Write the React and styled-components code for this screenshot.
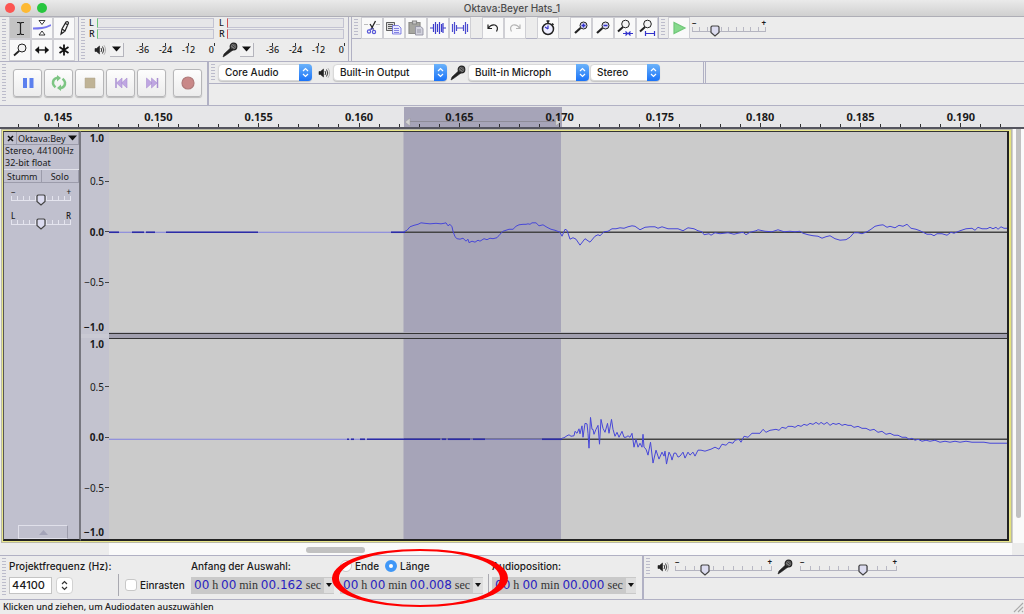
import React, { useState } from 'react';
import styled, { createGlobalStyle } from 'styled-components';

const GlobalStyle = createGlobalStyle`
    * {
        box-sizing: border-box;
    }

    body {
        margin: 0;
        background: #ececec;
        color: #1a1a1a;
        font-family: Inter, "Liberation Sans", sans-serif;
        font-size: 11px;
    }

    button, input, select {
        font: inherit;
        color: inherit;
        margin: 0;
        padding: 0;
    }

    svg {
        display: block;
    }
`;

const line = '#b1b1c4';
const lucida = '"Noto Sans", "DejaVu Sans", sans-serif';

const Window = styled.div`
    min-height: 100vh;
    display: flex;
    flex-direction: column;
    overflow: hidden;
`;

const TitleBar = styled.header`
    height: 17px;
    display: grid;
    grid-template-columns: 1fr auto 1fr;
    align-items: center;
    padding: 0 5px;
    border-bottom: 1px solid #aeaeb6;
    background: linear-gradient(#eaeaea, #d0d0d0);

    h1 {
        margin: 0;
        color: #4c4c4c;
        font-size: 10px;
        line-height: 16px;
        font-weight: 500;
    }
`;

const Lights = styled.div`
    display: flex;
    gap: 6px;
`;

const Light = styled.button`
    width: 10px;
    height: 10px;
    border: 0;
    border-radius: 50%;
    background: ${props => props.$color};
`;

const ToolDock = styled.div`
    display: flex;
    height: ${props => props.$height};
    border-bottom: 1px solid ${line};
`;

const Toolbar = styled.section`
    display: flex;
    align-items: ${props => props.$align || 'center'};
    border-right: ${props => (props.$open ? '0' : `1px solid ${line}`)};
    padding-left: 2px;
    flex: none;
`;

const DockStack = styled.div`
    flex: 1;
    min-width: 0;
    margin-left: ${props => props.$gap || '0'};
    border-left: 1px solid ${line};
`;

const DockRow = styled.div`
    display: flex;
    height: 22px;
    border-bottom: 1px solid ${line};
`;

const Grip = styled.i`
    flex: none;
    align-self: stretch;
    width: 4px;
    margin: 2px 3px 2px 0;
    background: repeating-linear-gradient(#bcbccb 0 1px, transparent 1px 3px);
`;

const ToolGrid = styled.div`
    display: grid;
    grid-template-columns: repeat(3, 22px);
    grid-auto-rows: 22px;
    margin-right: 3px;
`;

const ToolButton = styled.button`
    width: 22px;
    height: 22px;
    display: flex;
    align-items: center;
    justify-content: center;
    border: 1px solid #cfcfd4;
    background: ${props => (props.$active ? '#c3c3c3' : '#f9f9f9')};
`;

const ButtonGroup = styled.div`
    display: flex;
    margin-right: 11px;

    &:last-child {
        margin-right: 0;
    }
`;

const MeterBox = styled.div`
    width: 130px;
    height: 44px;
    padding-top: 1px;
`;

const MeterBars = styled.div`
    display: grid;
    grid-template-columns: 8px 1fr;
    grid-auto-rows: 10px;
    row-gap: 1px;
    margin-right: 4px;
    padding-left: 1px;
    font-family: ${lucida};
    font-size: 9px;
    font-weight: 500;
    line-height: 10px;
`;

const MeterBar = styled.div`
    border: 1px solid #c3c3d2;
    border-left: 1px solid ${props => props.$color};
    background: #e6e6e8;
`;

const MeterFoot = styled.div`
    display: flex;
    align-items: center;
    padding-left: 3px;
    height: 21px;
`;

const MeterMenu = styled.button`
    width: 14px;
    height: 14px;
    display: flex;
    align-items: center;
    justify-content: center;
    border: 0;
    border-right: 1px solid #b5b5bd;
    border-bottom: 1px solid #b5b5bd;
    background: #f2f2f2;
`;

const MeterScale = styled.div`
    flex: 1;
    display: grid;
    grid-template-columns: 23px 23px 23px 1fr;
    margin-left: 7px;
    font-family: ${lucida};
    font-size: 9px;
    font-weight: 500;
    line-height: 14px;
    text-align: center;

    span {
        background: linear-gradient(#333, #333) center top / 1px 3px no-repeat;
    }

    span:last-child {
        text-align: right;
        padding-right: 4px;
        background-position: calc(100% - 3px) top;
    }
`;

const TransportButtons = styled.div`
    display: flex;
    gap: 2px;
    padding: 0 5px 2px 4px;
`;

const TransportButton = styled.button`
    width: 29px;
    height: 28px;
    margin-left: ${props => (props.$apart ? '5px' : '0')};
    display: flex;
    align-items: center;
    justify-content: center;
    border: 1px solid #b6b6b8;
    border-radius: 3px;
    background: linear-gradient(#fdfdfd, #ececec);
    box-shadow: 0 1px 1px #bcbcbc;
`;

const DeviceSelect = styled.label`
    position: relative;
    width: ${props => props.$width};
    height: 17px;
    margin-right: ${props => props.$gap || '4px'};

    select {
        appearance: none;
        width: 100%;
        height: 17px;
        padding: 0 14px 0 6px;
        border: 1px solid #d9d9d9;
        border-radius: 4px;
        background: #fff;
        font-size: 10px;
        font-weight: 500;
        line-height: 15px;
        box-shadow: 0 1px 1px #c4c4c4;
    }

    span {
        position: absolute;
        top: 0;
        right: 0;
        width: 13px;
        height: 17px;
        display: flex;
        align-items: center;
        justify-content: center;
        border-radius: 0 4px 4px 0;
        background: linear-gradient(#6cb3fa, #1a73f8);
        pointer-events: none;
    }
`;

const IconSlot = styled.span`
    width: ${props => props.$width};
    margin-right: 2px;
    display: flex;
    justify-content: center;
`;

const SliderBox = styled.label`
    position: relative;
    display: block;
    width: ${props => props.$width};
    height: 20px;
    font-family: ${lucida};
    font-size: 8px;
    line-height: 9px;

    input {
        position: absolute;
        inset: 0;
        width: 100%;
        height: 100%;
        opacity: 0;
    }
`;

const SliderEnds = styled.span`
    display: flex;
    justify-content: space-between;
    font-weight: ${props => (props.$light ? '500' : '700')};
`;

const SliderScale = styled.span`
    display: block;
    height: 5px;
    border-bottom: 1px solid ${props => (props.$light ? '#e4e4ee' : '#b4b4c0')};
    background: repeating-linear-gradient(to right,
        ${props => (props.$light ? '#e4e4ee' : '#b8b8c4')} 0 1px, transparent 1px 10%);
    border-right: 1px solid ${props => (props.$light ? '#e4e4ee' : '#b8b8c4')};
`;

const SliderThumb = styled.svg`
    position: absolute;
    top: 7px;
    margin-left: -5px;
`;

const Ruler = styled.div`
    position: relative;
    height: 23px;
    background: #e6e6e8;
    border-bottom: 2px solid #55555f;
`;

const RulerSelection = styled.div`
    position: absolute;
    top: 1px;
    bottom: 0;
    left: 39.5%;
    width: 15.4%;
    background: #a6a4b8;

    svg {
        position: absolute;
        left: 0;
        bottom: 1px;
        width: 100%;
        height: 8px;
    }
`;

const RulerCells = styled.div`
    position: relative;
    display: grid;
    grid-template-columns: repeat(10, 1fr);
    height: 21px;
    margin: 0 13px 0 8px;
    font-family: ${lucida};
    font-weight: 700;
    line-height: 21px;
    text-align: center;
`;

const RulerCell = styled.div`
    position: relative;

    div {
        position: absolute;
        inset: auto 0 0 0;
        display: flex;
        justify-content: space-around;
        align-items: flex-end;
    }

    i {
        width: 1px;
        height: 3px;
        background: #333;
    }

    i:nth-child(3) {
        height: 4px;
    }
`;

const TrackArea = styled.main`
    flex: 1;
    display: flex;
    min-height: 300px;
`;

const Track = styled.section`
    flex: 1;
    min-width: 0;
    display: flex;
    margin-left: 1px;
    border: 1px solid #e3e17c;
    border-width: 1px 2px 1px 1px;
    outline: 1px solid #b9b9a8;
    outline-offset: -1px;
    padding: 1px;
    background: #e9e78a;

    > div {
        border-top: 1px solid #333;
        border-bottom: 2px solid #222;
    }
`;

const TrackPanel = styled.div`
    width: 78px;
    flex: none;
    display: flex;
    flex-direction: column;
    background: #c0c0ce;
    border-left: 1px solid #555;
    border-right: 2px solid #77777f;
    font-family: ${lucida};
    font-size: 9px;
    line-height: 13px;
`;

const TrackHead = styled.div`
    display: grid;
    grid-template-columns: 13px 1fr;
    height: 13px;
    border-bottom: 1px solid #9c9cab;
`;

const PanelButton = styled.button`
    display: flex;
    align-items: center;
    justify-content: ${props => (props.$menu ? 'space-between' : 'center')};
    padding: 0 ${props => (props.$menu ? '1px' : '0')};
    border: 0;
    border-right: 1px solid #9c9cab;
    background: transparent;
    line-height: 11px;
    white-space: nowrap;
`;

const TrackInfo = styled.p`
    margin: 0;
    padding: 0 1px;
    line-height: 12px;
    white-space: nowrap;
`;

const MuteSolo = styled.div`
    display: grid;
    grid-template-columns: 1fr 1fr;
    height: 14px;
    border-top: 1px solid #e2e2ea;
    border-bottom: 1px solid #9c9cab;
`;

const PanelSliders = styled.div`
    display: grid;
    gap: 4px;
    padding: 4px 7px;
`;

const Collapse = styled.button`
    width: 50px;
    height: 14px;
    margin: auto auto 0 14px;
    display: flex;
    align-items: center;
    justify-content: center;
    border: 1px solid #e0e0ea;
    border-right-color: #9c9cab;
    background: transparent;
`;

const Channels = styled.div`
    flex: 1;
    min-width: 0;
    display: flex;
    flex-direction: column;
    gap: 4px;
    background: linear-gradient(to right, #c9c9d3 28px, #a19fae 28px);
    border-right: 2px solid #222;
`;

const Channel = styled.div`
    flex: 1;
    min-height: 0;
    display: grid;
    grid-template-columns: 28px 1fr;
`;

const LevelRuler = styled.div`
    display: grid;
    grid-template-rows: 12px 1fr 26px 1fr 14px;
    align-items: center;
    background: #c3c3cf;
    font-family: ${lucida};
    font-size: 10px;
    line-height: 12px;
    text-align: right;

    span {
        padding-right: 5px;
    }

    span:nth-child(odd) {
        font-weight: 700;
    }

    span:nth-child(2), span:nth-child(3), span:nth-child(4) {
        background: linear-gradient(#444, #444) right center / 4px 1px no-repeat;
    }
`;

const WaveCanvas = styled.div`
    position: relative;
    min-width: 0;
    border-bottom: ${props => (props.$last ? '0' : '1px solid #333')};
    border-top: ${props => (props.$last ? '1px solid #333' : '0')};

    svg {
        position: absolute;
        width: 100%;
        height: 100%;
    }
`;

const VerticalScroll = styled.div`
    width: 12px;
    flex: none;
    padding: 0 3px 25px 3px;
    background: #fafafa;
    border-left: 1px solid #d0d0d0;

    div {
        height: 100%;
        border-radius: 0 0 4px 4px;
        background: #c1c1c1;
    }
`;

const HorizontalScroll = styled.div`
    height: 12px;
    margin: 0 12px 0 109px;
    padding: 4px 0 2px;
    background: #fafafa;

    div {
        width: 6.5%;
        height: 6px;
        margin-left: 21.8%;
        border-radius: 3px;
        background: #c1c1c1;
    }
`;

const BottomDock = styled.footer`
    position: relative;
    display: flex;
    height: 45px;
    border-top: 1px solid ${line};
    border-bottom: 1px solid ${line};
`;

const Field = styled.div`
    display: grid;
    grid-template-rows: 20px 18px;
    align-items: center;
    width: ${props => props.$width};
    white-space: nowrap;
    font-size: 10px;
    font-weight: 500;
`;

const FieldRow = styled.div`
    display: flex;
    align-items: center;
    gap: ${props => props.$gap || '4px'};

    input[type='text'] {
        width: 43px;
        height: 17px;
        padding-left: 2px;
        border: 1px solid #c4c4c4;
        background: #fff;
        font-size: 11px;
    }
`;

const Stepper = styled.button`
    width: 17px;
    height: 17px;
    display: flex;
    align-items: center;
    justify-content: center;
    border: 1px solid #d2d2d2;
    border-radius: 4px;
    background: #fff;
`;

const Divider = styled.i`
    width: 1px;
    height: 22px;
    margin: 18px ${props => props.$right} 0 ${props => props.$left};
    background: #a9a9b0;
`;

const Choice = styled.label`
    display: flex;
    align-items: center;
    gap: 3px;
    font-size: 10px;
    font-weight: 500;

    input {
        appearance: none;
        width: 12px;
        height: 12px;
        border: 1px solid #c8c8c8;
        border-radius: ${props => (props.$round ? '50%' : '3px')};
        background: #fff;
    }

    input:checked {
        border: 4px solid #3f97f7;
    }
`;

const TimeField = styled.div`
    display: flex;
    align-items: center;
    justify-content: space-between;
    height: 17px;
    padding-left: 3px;
    background: #c9c9c9;
    color: #333;
    font-family: "Liberation Serif", serif;
    font-size: 12px;
    line-height: 17px;

    b {
        color: #2a1fc0;
        font-family: "DejaVu Sans", sans-serif;
        font-weight: 400;
    }

    button {
        width: 10px;
        height: 15px;
        display: flex;
        align-items: center;
        justify-content: center;
        border: 0;
        background: #dedede;
    }
`;

const RedMark = styled.svg`
    position: absolute;
    left: 332px;
    top: -8px;
    pointer-events: none;
`;

const StatusBar = styled.div`
    display: flex;
    justify-content: space-between;
    height: 14px;
    padding-left: 3px;
    font-family: ${lucida};
    font-size: 9px;
    font-weight: 500;
    line-height: 13px;
`;

const Icon = ({ size = 18, w = size, h = size, children }) => (
    <svg width={w} height={h} viewBox={`0 0 ${w} ${h}`} fill="none" stroke="#222" strokeWidth="1.2">
        {children}
    </svg>
);

const Down = () => (
    <svg width="9" height="6" viewBox="0 0 9 6"><path d="M0 0.5h9L4.500 5.500z" fill="#111" /></svg>
);

const SmallDown = () => (
    <svg width="6" height="4" viewBox="0 0 6 4"><path d="M0 0h6L3 4z" fill="#111" /></svg>
);

const UpDown = ({ color }) => (
    <Icon w={7} h={11}>
        <path d="M1 4L3.500 1.500 6 4M1 7l2.500 2.500L6 7" stroke={color} />
    </Icon>
);

const Speaker = () => (
    <Icon w={12} h={12}>
        <path d="M1 4.500h1.500L5.500 2v8L2.500 7.500H1z" fill="#222" strokeWidth="0.600" />
        <path d="M7 4q1.500 2 0 4M8.500 2.500q2.600 3.500 0 7" strokeWidth="0.900" />
        <path d="M10 1.200q3.200 4.800 0 9.600" strokeWidth="0.500" stroke="#777" />
    </Icon>
);

const Mic = () => (
    <Icon w={16} h={16}>
        <path d="M1 15l1-3 7-6.500L11 8l-7.500 5.500z" fill="#222" strokeWidth="0.600" />
        <circle cx="11.500" cy="4.500" r="3.300" fill="#777" />
        <path d="M9.500 3l4 3M11 1.500l3 3M9 5.500l3 2" strokeWidth="0.700" />
    </Icon>
);

const toolIcons = {
    Auswahl: <Icon><path d="M6 3.500h2.500L9.500 4.500 10.500 3.500H13M9.500 4.500v10M6 15.500h2.500l1-1 1 1H13" /></Icon>,
    'Hüllkurve': (
        <Icon>
            <path d="M0 9.500q5 0 9-.5t9-3" stroke="#7676ee" strokeWidth="1.800" />
            <path d="M6 1.500h6L9 5.500zM9 12l3 4H6z" fill="#fff" strokeWidth="0.900" />
        </Icon>
    ),
    Zeichnen: <Icon><path d="M6 15l1-5 4-7q2-1 2.500 1L10 12zM7 10l3 2M10.500 4.500l2.500 1.500" /></Icon>,
    Zoom: <Icon><circle cx="11" cy="7" r="4" fill="#f4f4f4" strokeWidth="1" /><path d="M8 10l-5 4.500" strokeWidth="1.800" /></Icon>,
    Verschieben: <Icon><path d="M3 9h12" strokeWidth="1.500" /><path d="M6 5.500L2 9l4 3.500zM12 5.500l4 3.500-4 3.500z" fill="#111" strokeWidth="0.300" /></Icon>,
    Multi: <Icon><path d="M9 3.500v11M4.500 6l9 6M13.500 6l-9 6" strokeWidth="1.800" stroke="#111" /></Icon>,
};

const lens = (
    <>
        <circle cx="11.500" cy="6.500" r="3.500" fill="#dcdcf0" strokeWidth="1" />
        <path d="M8.500 9l-5.500 5" strokeWidth="2.200" />
    </>
);

const editGroups = [
    {
        Ausschneiden: (
            <Icon>
                <path d="M1 5.500h4M13 5.500h4" stroke="#bbb" />
                <path d="M12.500 2L8 10.500M7 5l3.500 5.500" strokeWidth="1.300" />
                <path d="M6.500 10.500l4-1" stroke="#5757d8" />
                <circle cx="6" cy="12.500" r="1.600" stroke="#5757d8" /><circle cx="11" cy="13" r="1.600" stroke="#5757d8" />
            </Icon>
        ),
        Kopieren: (
            <Icon>
                <path d="M1.500 3.500h8v8h-8zM3 5.500h5M3 7.500h5M3 9.500h5" fill="#ddd" strokeWidth="0.700" />
                <path d="M7.500 6.500h6l2.500 2.500v6H7.500zM9 9.500h5M9 11.500h5M9 13.500h5" fill="#e8e8ff" stroke="#5757d8" strokeWidth="0.700" />
            </Icon>
        ),
        'Einfügen': (
            <Icon>
                <path d="M2 3.500h11v11H2z" fill="#a6a6a0" stroke="#8c8c88" /><path d="M5.500 2h4v3h-4z" fill="#ccc" stroke="#888" />
                <path d="M8.500 7.500h5l2.500 2v6.500H8.500zM10 11h4M10 13h4" fill="#d2d2dd" stroke="#9292a2" strokeWidth="0.900" />
            </Icon>
        ),
        Trimmen: <Icon><path d="M1 9h3M14 9h3M4.500 5v8M6.500 3v12M8.500 5v8M10.500 3v12M12.500 5v8M14 4v10" stroke="#3c3ccc" /></Icon>,
        Stille: <Icon><path d="M1.500 5v8M3.500 3v12M5.500 6v6M6 9h6M12.500 6v6M14.500 3v12M16.500 5v8" stroke="#4a4ad0" /></Icon>,
    },
    {
        'Rückgängig': <Icon><path d="M4 9.500q3-4.500 7-3.500 4 2 1.500 6.500M4 5.500v4h4" strokeWidth="1.200" /></Icon>,
        Wiederholen: <Icon><path d="M14 9.500q-3-4.500-7-3.500-4 2-1.500 6.500M14 5.500v4h-4" stroke="#b5b5b5" /></Icon>,
    },
    {
        Timer: (
            <Icon>
                <circle cx="9" cy="10" r="5.500" fill="#eef" strokeWidth="1.500" />
                <path d="M7.500 2h3M9 2v2.500M13 4.500l1.500 1.500" strokeWidth="1.600" /><path d="M9 10V6.500M9 10l-3-2" stroke="#33c" />
            </Icon>
        ),
    },
    {
        'Einzoomen': <Icon>{lens}<path d="M9.500 6.500h4M11.500 4.500v4" stroke="#33c" strokeWidth="1.500" /></Icon>,
        'Auszoomen': <Icon>{lens}<path d="M9.500 6.500h4" stroke="#33c" strokeWidth="1.500" /></Icon>,
        'Auswahl einpassen': (
            <Icon>
                <circle cx="9.500" cy="5" r="3.800" fill="#f4f4f4" strokeWidth="1" /><path d="M7 8l-5 4.500" strokeWidth="2" />
                <path d="M7 14.500h4.500M12.500 14.500H17M9.500 12.500l2 2-2 2M14.500 12.500l-2 2 2 2" stroke="#33c" />
            </Icon>
        ),
        'Projekt einpassen': (
            <Icon>
                <circle cx="9.500" cy="5" r="3.800" fill="#f4f4f4" strokeWidth="1" /><path d="M7 8l-5 4.500" strokeWidth="2" />
                <path d="M7 14.500h10M7.500 12v5M16.500 12v5" stroke="#33c" />
            </Icon>
        ),
    },
];

const transport = {
    Pause: <Icon><path d="M4 4h4v10H4zM10.500 4h4v10h-4z" fill="#5c80ee" stroke="none" /></Icon>,
    Wiedergabe: (
        <Icon>
            <path d="M7.500 3.800q-5 1-4.500 6 .5 2 2.500 3.500M10.500 14.200q5-1 4.500-6-.5-2-2.500-3.500" stroke="#7dc583" strokeWidth="2.500" />
            <path d="M7 1l4 3-4 3.500zM11 17l-4-3 4-3.500z" fill="#7dc583" stroke="none" />
        </Icon>
    ),
    Stopp: <Icon><path d="M4 4h10v10H4z" fill="#bfb395" stroke="#b0a68c" strokeWidth="0.500" /></Icon>,
    Anfang: <Icon><path d="M4 4v10" stroke="#a98fd0" strokeWidth="1.500" /><path d="M10 4v10L4.500 9zM15 4v10L9.500 9z" fill="#bfa6e2" stroke="#a98fd0" strokeWidth="0.600" /></Icon>,
    Ende: <Icon><path d="M14.500 4v10" stroke="#a98fd0" strokeWidth="1.500" /><path d="M3.500 4v10L9 9zM8.500 4v10L14 9z" fill="#bfa6e2" stroke="#a98fd0" strokeWidth="0.600" /></Icon>,
    Aufnahme: <Icon><circle cx="9" cy="9" r="6" fill="#c98888" stroke="#b07a7a" /></Icon>,
};

const Slider = ({ name, width, start, low = '−', high = '+', light }) => {
    const [value, setValue] = useState(start);

    return (
        <SliderBox $width={width}>
            <SliderEnds $light={light}><span>{low}</span><span>{high}</span></SliderEnds>
            <SliderScale $light={light} />
            <SliderThumb width="10" height="12" viewBox="0 0 10 12" style={{ left: `${value}%` }}>
                <path d="M2 1h6l1 1v5.500L5 11 1 7.500V2z" fill="#dcdcf0" stroke="#444" strokeWidth="1.200" />
            </SliderThumb>
            <input type="range" aria-label={name} value={value} onChange={e => setValue(Number(e.target.value))} />
        </SliderBox>
    );
};

const Meter = ({ name, color, icon }) => (
    <MeterBox>
        <MeterBars>
            <span>L</span><MeterBar $color={color} />
            <span>R</span><MeterBar $color={color} />
        </MeterBars>
        <MeterFoot>
            <IconSlot $width="17px">{icon}</IconSlot>
            <MeterMenu aria-label={name}><Down /></MeterMenu>
            <MeterScale><span>-36</span><span>-24</span><span>-12</span><span>0</span></MeterScale>
        </MeterFoot>
    </MeterBox>
);

const Device = ({ name, value, width, gap }) => (
    <DeviceSelect $width={width} $gap={gap}>
        <select aria-label={name} defaultValue={value}><option>{value}</option></select>
        <span><UpDown color="#fff" /></span>
    </DeviceSelect>
);

const Time = ({ seconds }) => (
    <TimeField>
        <b>00</b><span>h</span><b>00</b><span>min</span><b>{seconds}</b><span>sec</span>
        <button aria-label="Format"><SmallDown /></button>
    </TimeField>
);

// x,y pairs in track coordinates, zero line at y = 101
const leftWave = `404,100.500 407,99 410,95.500 414,94 418,93 421,91.500 425,92 430,92.500 436,92 441,92.500 444,92 446,91.500
448,94.500 450,93 452,95.500 453,100 455,105.500 457,107.500 460,108 463,107 466,110 468,108 469,111.500 472,110 475,111
478,109 480,110 484,107.500 487,108.500 490,107 493,107.500 497,106.500 500,103 503,100 506,99 509,98 513,98 516,95 519,93.500
523,93 526,93 528,92.500 530,93 532,91.500 536,91.500 539,94.500 543,93.500 547,96 551,98 555,99 560,101 562,105 565,98
567,99 570,108 573,106.500 576,108 580,114 585,107.500 590,111 595,105 598,103.500 600,104.500 604,100.500 608,100 612,97.500
616,97.500 620,96.500 624,97 628,95.500 632,94.500 635,95 640,98.500 645,96 650,95.500 655,95.500 658,97 662,95.500 668,97.500
673,97.500 678,97.500 683,99.500 688,96.500 694,97.500 698,99.500 702,100.500 704,103.500 709,102.500 711,104 715,101.500
720,102.500 728,101.500 734,103 738,102 743,101 746,103.500 750,101 756,99.500 758,98.500 765,100 772,100.500 778,98.500
784,100.500 790,100 795,100.500 800,100 803,102 808,103.500 813,104.500 818,105 822,107 826,105.500 830,104.500 835,107.500
840,109 846,108.500 850,106 854,101.500 858,101.500 862,102.500 867,100.500 871,98 875,95 879,94 883,93.500 887,96 890,95
895,96.500 899,94 903,95 907,93 911,97 916,98 920,99.500 924,101.500 927,103 931,103 934,104.500 937,102.500 942,102.500
947,104 951,101 954,102 960,99.500 966,97.500 972,97 975,99 978,96 982,97.500 987,97.500 990,96 993,97.500 996,96 998,98
1001,95.500 1004,97 1007,97`;

const rightWave = `562,100 564,99.500 567,97.500 569,96.500 571,98 574,97.500 575,93 577,95 579,90.500 580,95.500 582,87.500 583,99
585,85 587,85.500 588,95 589,110 590.500,79 592,91 593,91 594,96 596,91 598,87 599.500,106 601,81 603,90 605,94 607.500,85
609,95 611.500,81 613,91 615,98 617,94 619,99 622,93 624,99 626,99 628,97.500 630,99 632,95 634,109 636,101 638,109 640,105
642,109 643,96 644,109 646,111 648,117 650.500,104 653,125 656,112 659,121 662,114 664,118 665,113 666.500,126 669,114
671,118 672,122 674,115 676,115 678,119 680,118 683,114 685,120 688,114 690,117 693,114 695,118 698,112 701,112 705,113
708,112 711,111 715,109 719,111 722,106 726,107 729,104 733,105 735,102 739,101 741,104 744,98 748,99 752,95 756,95 760,95
763,91 766,94 770,92 776,91 779,92 782,89 786,90 788,88 792,88 795,89 798,87 801,88 804,86 807,87 810,85 813,86 816,84
819,86 821,84 824,86 827,84 830,87 833,85 836,86 839,85 842,87 845,86 848,87 851,87 854,89 858,88 862,90 866,90 870,92
874,91 878,94 882,93 886,96 890,95 894,97 898,97 902,99 906,99 909,101 912,100 915,102 918,101 922,103 926,102 930,103
935,102 940,104 945,103 950,104 955,103 960,104 966,103 972,104 978,104 984,104 990,105 996,105 1002,105 1007,105`;

const Wave = ({ points, quiet, loud, last }) => (
    <WaveCanvas $last={last}>
        <svg viewBox="109 0 898 202" preserveAspectRatio="none" fill="none">
            <rect x="109" width="898" height="202" fill="#cbcbcb" />
            <rect x="403.500" width="157.500" height="202" fill="#a6a4b8" />
            <path d="M404 101H1007" stroke="#444" strokeWidth="1.500" />
            <path d={`M${quiet[0]} 101H${quiet[1]}`} stroke="#8080e0" />
            {loud.map(([from, to]) => (
                <path key={from} d={`M${from} 101H${to}`} stroke="#2c2ca6" strokeWidth="1.600" />
            ))}
            <polyline points={points} stroke="#4747d8" vectorEffect="non-scaling-stroke" />
        </svg>
    </WaveCanvas>
);

const Levels = () => (
    <LevelRuler>
        <span>1.0</span><span>0.5</span><span>0.0</span><span>−0.5</span><span>−1.0</span>
    </LevelRuler>
);

const times = ['0.145', '0.150', '0.155', '0.160', '0.165', '0.170', '0.175', '0.180', '0.185', '0.190'];

const App = () => {
    const [tool, setTool] = useState('Auswahl');

    return (
        <Window>
            <GlobalStyle />
            <TitleBar>
                <Lights>
                    <Light $color="#fc5652" aria-label="Schließen" />
                    <Light $color="#fdb933" aria-label="Minimieren" />
                    <Light $color="#27c63f" aria-label="Vergrößern" />
                </Lights>
                <h1>Oktava:Beyer Hats_1</h1>
            </TitleBar>

            <ToolDock $height="45px">
                <Toolbar>
                    <Grip />
                    <ToolGrid>
                        {Object.entries(toolIcons).map(([name, icon]) => (
                            <ToolButton key={name} aria-label={name} $active={tool === name} onClick={() => setTool(name)}>
                                {icon}
                            </ToolButton>
                        ))}
                    </ToolGrid>
                </Toolbar>
                <Toolbar>
                    <Grip />
                    <Meter name="Wiedergabepegel" color="#6cc678" icon={<Speaker />} />
                    <Meter name="Aufnahmepegel" color="#d05050" icon={<Mic />} />
                </Toolbar>
                <DockStack $gap="2px">
                    <DockRow>
                        <Toolbar>
                            <Grip />
                            {editGroups.map((group, i) => (
                                <ButtonGroup key={i}>
                                    {Object.entries(group).map(([name, icon]) => (
                                        <ToolButton key={name} aria-label={name}>{icon}</ToolButton>
                                    ))}
                                </ButtonGroup>
                            ))}
                        </Toolbar>
                        <Toolbar $open>
                            <Grip />
                            <ToolButton aria-label="Abspielen">
                                <Icon><path d="M4 3.500v11L15 9z" fill="#86d98c" stroke="#6fc678" /></Icon>
                            </ToolButton>
                            <IconSlot $width="0" />
                            <Slider name="Geschwindigkeit" width="74px" start={31} />
                        </Toolbar>
                    </DockRow>
                </DockStack>
            </ToolDock>

            <ToolDock $height="44px">
                <Toolbar>
                    <Grip />
                    <TransportButtons>
                        {Object.entries(transport).map(([name, icon]) => (
                            <TransportButton key={name} aria-label={name} $apart={name === 'Aufnahme'}>{icon}</TransportButton>
                        ))}
                    </TransportButtons>
                </Toolbar>
                <DockStack>
                    <DockRow>
                        <Toolbar>
                            <Grip />
                            <Device name="Audio-Host" value="Core Audio" width="94px" />
                            <IconSlot $width="15px"><Speaker /></IconSlot>
                            <Device name="Ausgabe" value="Built-in Output" width="114px" gap="2px" />
                            <IconSlot $width="17px"><Mic /></IconSlot>
                            <Device name="Eingabe" value="Built-in Microph" width="121px" gap="1px" />
                            <Device name="Kanäle" value="Stereo" width="70px" gap="43px" />
                        </Toolbar>
                        <DockStack $gap="1px" />
                    </DockRow>
                </DockStack>
            </ToolDock>

            <Ruler>
                <RulerSelection>
                    <svg viewBox="0 0 158 8" preserveAspectRatio="none">
                        <path d="M4 3.500H154" stroke="#8e8c98" />
                        <path d="M6 0v8L1 4zM152 0v8l5-4z" fill="#d2d2d2" stroke="#999" strokeWidth="0.500" />
                    </svg>
                </RulerSelection>
                <RulerCells>
                    {times.map(time => (
                        <RulerCell key={time}>
                            {time}
                            <div><i /><i /><i /><i /><i /></div>
                        </RulerCell>
                    ))}
                </RulerCells>
            </Ruler>

            <TrackArea>
                <Track>
                    <TrackPanel>
                        <TrackHead>
                            <PanelButton aria-label="Spur schließen">
                                <Icon w={7} h={7}><path d="M1 1l5 5M6 1L1 6" strokeWidth="1.600" stroke="#111" /></Icon>
                            </PanelButton>
                            <PanelButton $menu>Oktava:Bey<Down /></PanelButton>
                        </TrackHead>
                        <TrackInfo>Stereo, 44100Hz</TrackInfo>
                        <TrackInfo>32-bit float</TrackInfo>
                        <MuteSolo>
                            <PanelButton>Stumm</PanelButton>
                            <PanelButton>Solo</PanelButton>
                        </MuteSolo>
                        <PanelSliders>
                            <Slider name="Lautstärke" width="60px" start={50} light />
                            <Slider name="Balance" width="60px" start={50} low="L" high="R" light />
                        </PanelSliders>
                        <Collapse aria-label="Einklappen">
                            <svg width="9" height="5" viewBox="0 0 9 5"><path d="M0 5h9L4.500 0z" fill="#a3a3b8" /></svg>
                        </Collapse>
                    </TrackPanel>
                    <Channels>
                        <Channel>
                            <Levels />
                            <Wave
                                points={leftWave}
                                quiet={[109, 404]}
                                loud={[[109, 119], [132, 144], [146, 155], [166, 258], [391, 405]]}
                            />
                        </Channel>
                        <Channel>
                            <Levels />
                            <Wave
                                points={rightWave}
                                quiet={[109, 562]}
                                loud={[[347, 349], [351, 354], [360, 365], [367, 440], [442, 446], [448, 470], [473, 485], [542, 562]]}
                                last
                            />
                        </Channel>
                    </Channels>
                </Track>
                <VerticalScroll><div /></VerticalScroll>
            </TrackArea>
            <HorizontalScroll><div /></HorizontalScroll>

            <BottomDock>
                <Toolbar $align="flex-start">
                    <Grip />
                    <Field $width="109px">
                        <label htmlFor="rate">Projektfrequenz (Hz):</label>
                        <FieldRow>
                            <input id="rate" type="text" defaultValue="44100" />
                            <Stepper aria-label="Frequenz wählen"><UpDown color="#333" /></Stepper>
                        </FieldRow>
                    </Field>
                    <Divider $left="0" $right="6px" />
                    <Field $width="66px">
                        <span />
                        <Choice><input type="checkbox" />Einrasten</Choice>
                    </Field>
                    <Field $width="143px">
                        <span>Anfang der Auswahl:</span>
                        <Time seconds="00.162" />
                    </Field>
                    <IconSlot $width="4px" />
                    <Field $width="143px">
                        <FieldRow $gap="6px">
                            <Choice $round><input type="radio" name="end" />Ende</Choice>
                            <Choice $round><input type="radio" name="end" defaultChecked />Länge</Choice>
                        </FieldRow>
                        <Time seconds="00.008" />
                    </Field>
                    <Divider $left="5px" $right="3px" />
                    <Field $width="144px">
                        <span>Audioposition:</span>
                        <Time seconds="00.000" />
                    </Field>
                    <IconSlot $width="4px" />
                </Toolbar>
                <DockStack>
                    <DockRow>
                        <Toolbar $open>
                            <Grip />
                            <IconSlot $width="20px"><Speaker /></IconSlot>
                            <Slider name="Ausgabelautstärke" width="97px" start={31} />
                            <IconSlot $width="26px"><Mic /></IconSlot>
                            <Slider name="Eingabelautstärke" width="97px" start={65} />
                        </Toolbar>
                    </DockRow>
                </DockStack>
                <RedMark width="177" height="60" viewBox="0 0 177 60">
                    <path
                        d="M0 30C2 12 38 1 88 1s88 12 88 29-38 29-88 29S-1 47 0 30zM7 30c0 15 34 27 81 27s80-12 80-27S134 3 88 3 7 15 7 30z"
                        fill="#f00"
                        fillRule="evenodd"
                    />
                </RedMark>
            </BottomDock>

            <StatusBar>
                <span>Klicken und ziehen, um Audiodaten auszuwählen</span>
                <Icon w={12} h={13}><path d="M2 12L11 3M6 12l5-5M10 12l1-1" stroke="#aaa" /></Icon>
            </StatusBar>
        </Window>
    );
};

export default App;
